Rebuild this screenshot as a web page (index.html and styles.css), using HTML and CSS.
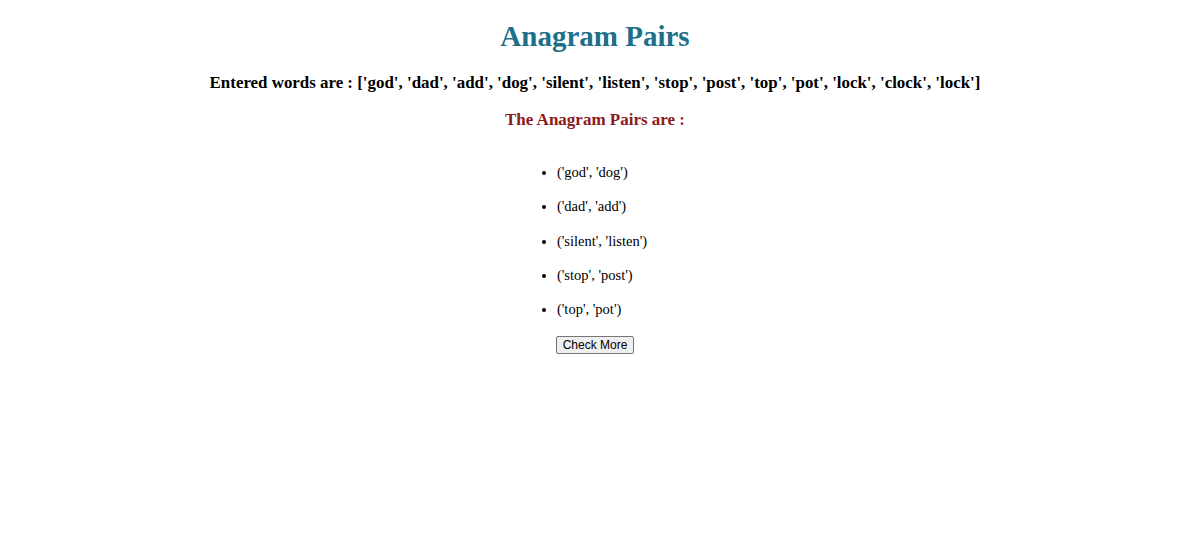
FILE: index.html
```html
<!DOCTYPE html>
<html>
<head>
<meta charset="utf-8">
<link rel="stylesheet" href="styles.css">
</head>
<body>
<div class="page">
  <h1 class="title">Anagram Pairs</h1>
  <h3 class="entered">Entered words are : ['god', 'dad', 'add', 'dog', 'silent', 'listen', 'stop', 'post', 'top', 'pot', 'lock', 'clock', 'lock']</h3>
  <h3 class="subtitle">The Anagram Pairs are :</h3>
  <ul class="pairs">
    <li>('god', 'dog')</li>
    <li>('dad', 'add')</li>
    <li>('silent', 'listen')</li>
    <li>('stop', 'post')</li>
    <li>('top', 'pot')</li>
  </ul>
  <div class="actions"><button class="btn">Check More</button></div>
</div>
</body>
</html>
```
FILE: styles.css
```css
body {
  margin: 0;
  font-family: "Liberation Serif", "Times New Roman", serif;
  background: #fff;
}
.page {
  text-align: center;
  padding-top: 18px;
}
.title {
  margin: 0;
  font-size: 29px;
  color: #1e6f8a;
  line-height: 36px;
}
.entered {
  margin: 19px 0 0;
  font-size: 16.9px;
  color: #000;
  line-height: 20px;
}
.subtitle {
  margin: 17px 0 0;
  font-size: 17px;
  color: #8b1a1a;
  line-height: 20px;
}
.pairs {
  display: inline-block;
  text-align: left;
  margin: 34px 0 0;
  padding-left: 40px;
  padding-right: 26px;
  font-size: 14.5px;
}
.pairs li {
  line-height: 17px;
  margin-bottom: 17.3px;
}
.actions {
  margin-top: 0;
}
.btn {
  font-family: "Liberation Sans", Arial, sans-serif;
  font-size: 12px;
  padding: 1px 6px;
  border: 1px solid #767676;
  border-radius: 2px;
  background: #efefef;
  color: #000;
}
```
